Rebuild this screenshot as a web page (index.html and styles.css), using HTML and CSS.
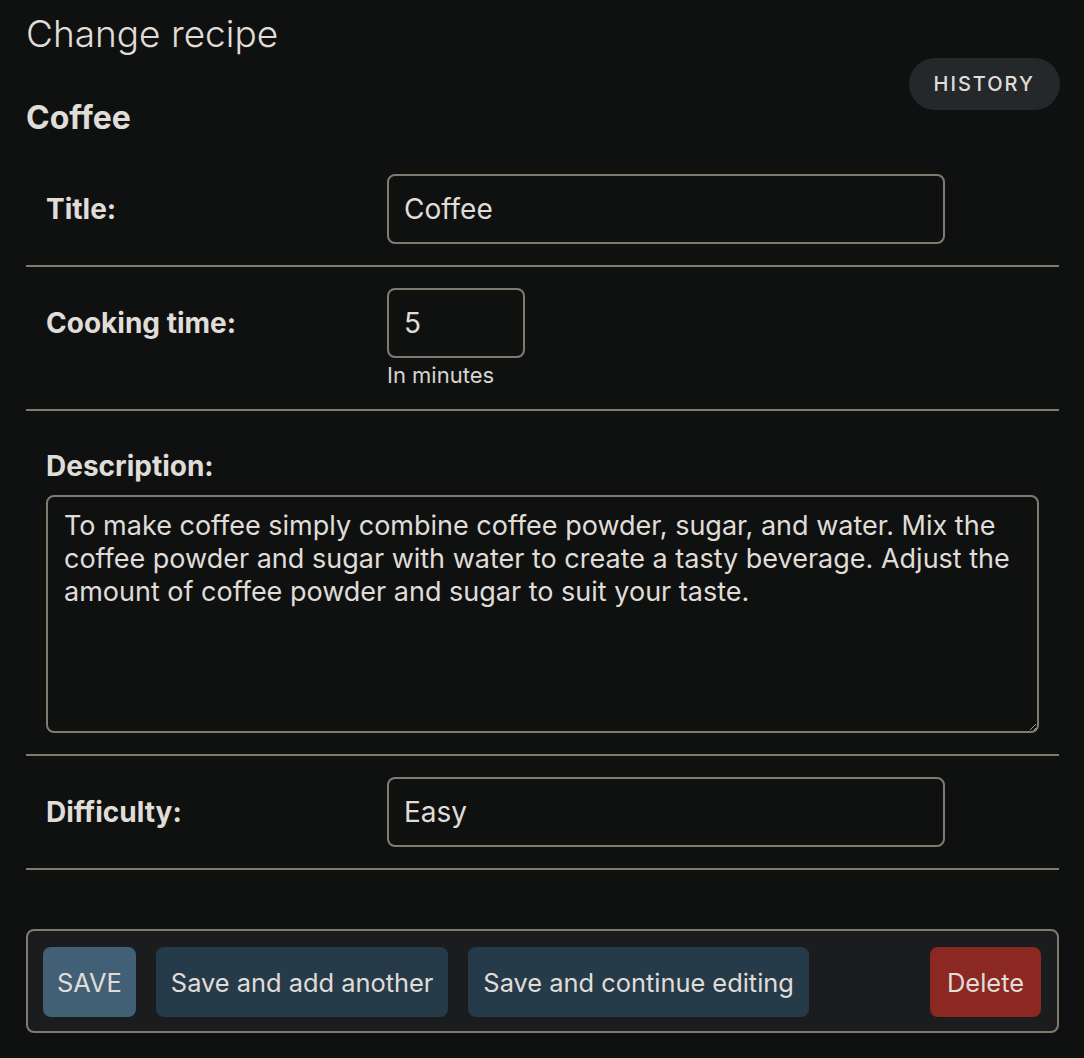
FILE: index.html
```html
<!DOCTYPE html>
<html lang="en">
<head>
<meta charset="utf-8">
<title>Change recipe</title>
<link rel="stylesheet" href="styles.css">
</head>
<body>
<div class="content">
  <h1 class="page-title">Change recipe</h1>
  <div class="object-head">
    <h2 class="object-name">Coffee</h2>
    <a class="history-link" href="#">History</a>
  </div>
  <form class="change-form">
    <div class="fieldset">
      <div class="form-row">
        <label class="field-label" for="id_title">Title:</label>
        <div class="field-box">
          <input class="text-input wide" id="id_title" type="text" value="Coffee">
        </div>
      </div>
      <div class="form-row">
        <label class="field-label" for="id_time">Cooking time:</label>
        <div class="field-box">
          <input class="text-input narrow" id="id_time" type="text" value="5">
          <div class="help">In minutes</div>
        </div>
      </div>
      <div class="form-row stacked">
        <label class="field-label stacked-label" for="id_desc">Description:</label>
        <textarea class="text-area" id="id_desc">To make coffee simply combine coffee powder, sugar, and water. Mix the coffee powder and sugar with water to create a tasty beverage. Adjust the amount of coffee powder and sugar to suit your taste.</textarea>
      </div>
      <div class="form-row">
        <label class="field-label" for="id_diff">Difficulty:</label>
        <div class="field-box">
          <input class="text-input wide" id="id_diff" type="text" value="Easy">
        </div>
      </div>
    </div>
    <div class="submit-row">
      <button type="button" class="btn btn-default">SAVE</button>
      <button type="button" class="btn">Save and add another</button>
      <button type="button" class="btn">Save and continue editing</button>
      <button type="button" class="btn btn-delete">Delete</button>
    </div>
  </form>
</div>
</body>
</html>
```

FILE: styles.css
```css
html {
  color-scheme: dark;
}
body {
  margin: 0;
  background: #0f1111;
  color: #e0ddd8;
  font-family: "Inter", "Noto Sans", sans-serif;
}
.content {
  padding: 10px 25px 0 26px;
}
.page-title {
  margin: 0;
  font-size: 37px;
  line-height: 48px;
  font-weight: 300;
  color: #e0ddd8;
}
.object-head {
  display: flex;
  justify-content: space-between;
  align-items: flex-start;
}
.object-name {
  margin: 40px 0 0;
  font-size: 32px;
  line-height: 40px;
  font-weight: 700;
}
.history-link {
  display: flex;
  align-items: center;
  height: 52px;
  padding: 0 25px;
  margin-right: -1px;
  border-radius: 26px;
  background: #25282a;
  color: #e0ddd8;
  text-decoration: none;
  text-transform: uppercase;
  font-size: 20px;
  font-weight: 500;
  letter-spacing: 2px;
}
.change-form {
  margin-top: 15px;
}
.form-row {
  display: flex;
  padding: 21px 20px 21px 20px;
  border-bottom: 2px solid #817b6f;
}
.form-row.stacked {
  flex-direction: column;
}
.field-label {
  width: 341px;
  flex-shrink: 0;
  font-size: 28px;
  line-height: 70px;
  font-weight: 700;
}
.stacked-label {
  line-height: 58px;
  padding-top: 5px;
}
.text-input {
  box-sizing: border-box;
  height: 70px;
  padding: 0 15px;
  border: 2px solid #817b6f;
  border-radius: 8px;
  background: #0f1111;
  color: #e0ddd8;
  font-family: "Inter", "Noto Sans", sans-serif;
  font-size: 28px;
  outline: none;
}
.text-input.wide {
  width: 558px;
}
.text-input.narrow {
  width: 138px;
}
.help {
  margin-top: 4px;
  font-size: 22px;
  line-height: 26px;
  color: #d8d5d0;
}
.text-area {
  box-sizing: border-box;
  width: 100%;
  height: 238px;
  padding: 12px 8px 12px 16px;
  border: 2px solid #817b6f;
  border-radius: 8px;
  background: #0f1111;
  color: #e0ddd8;
  font-family: "Inter", "Noto Sans", sans-serif;
  font-size: 27px;
  line-height: 33px;
  outline: none;
}
.submit-row {
  display: flex;
  gap: 20px;
  margin-top: 59px;
  padding: 16px 16px 14px 15px;
  border: 2px solid #817b6f;
  border-radius: 8px;
  background: #1b1c1e;
}
.btn {
  height: 70px;
  padding: 0 15px;
  border: none;
  border-radius: 8px;
  background: #263b4a;
  color: #e0ddd8;
  font-family: "Inter", "Noto Sans", sans-serif;
  font-size: 25.4px;
  cursor: pointer;
}
.btn-default {
  padding: 0 14px;
  background: #426075;
}
.btn-delete {
  margin-left: auto;
  padding: 0 17px;
  background: #8b2822;
}
```
